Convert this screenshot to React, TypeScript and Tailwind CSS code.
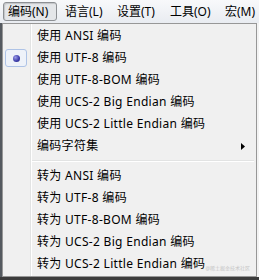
import { Fragment } from 'react'

const topMenus = [
  { label: '编码(N)', active: true, width: 'w-[54px]' },
  { label: '语言(L)', width: 'w-[52px]' },
  { label: '设置(T)', width: 'w-[53px]' },
  { label: '工具(O)', width: 'w-[55px]' },
  { label: '宏(M)', width: 'w-[40px]' },
]

const useItems = [
  { label: '使用 ANSI 编码' },
  { label: '使用 UTF-8 编码', checked: true },
  { label: '使用 UTF-8-BOM 编码' },
  { label: '使用 UCS-2 Big Endian 编码' },
  { label: '使用 UCS-2 Little Endian 编码' },
  { label: '编码字符集', submenu: true },
]

const convertItems = [
  '转为 ANSI 编码',
  '转为 UTF-8 编码',
  '转为 UTF-8-BOM 编码',
  '转为 UCS-2 Big Endian 编码',
  '转为 UCS-2 Little Endian 编码',
]

function MenuRow({ label, checked, submenu }: { label: string; checked?: boolean; submenu?: boolean }) {
  return (
    <div className="flex h-[22px] items-center">
      <div className="flex w-[28px] items-center pl-[2px]">
        {checked && (
          <div className="flex h-[18px] w-[22px] items-center justify-center rounded-[3px] border border-[#aec3e6] bg-[#eef2f9]">
            <div className="h-[7px] w-[7px] rounded-full bg-[radial-gradient(circle_at_35%_35%,#9a9ae8,#3a3aa8_60%,#26267a)]" />
          </div>
        )}
      </div>
      <span className="whitespace-nowrap pl-[6px] text-[12px] leading-none tracking-[0.3px] text-black">{label}</span>
      {submenu && (
        <svg className="ml-auto mr-[11px]" width="4" height="7" viewBox="0 0 4 7">
          <path d="M0 0 L4 3.5 L0 7 Z" fill="#000" />
        </svg>
      )}
    </div>
  )
}

export default function App() {
  return (
    <div
      className="flex h-[280px] w-[259px] flex-col overflow-hidden bg-[#3b3b3b]"
      style={{ fontFamily: '"Noto Sans", "Noto Sans CJK SC", sans-serif' }}
    >
      <div className="flex h-[23px] items-center bg-gradient-to-b from-[#f8f9fb] to-[#e9ecf1] pl-[3px]">
        {topMenus.map((menu) => (
          <div
            key={menu.label}
            className={
              menu.active
                ? `mr-[2px] flex h-[19px] shrink-0 items-center whitespace-nowrap rounded-[3px] border border-[#8d9094] bg-[#e4e6e9] pl-[4px] text-[12px] leading-none text-black shadow-[inset_1px_1px_1px_rgba(0,0,0,0.15)] ${menu.width}`
                : `flex h-[19px] shrink-0 items-center whitespace-nowrap pl-[6px] text-[12px] leading-none text-black ${menu.width}`
            }
          >
            {menu.label}
          </div>
        ))}
      </div>

      <div className="flex">
        <div className="w-[2px] bg-[#555a60]" />
        <div className="relative h-[254px] w-[255px] border border-[#979797] bg-[#f0f0f0] bg-[linear-gradient(to_right,transparent_27px,#e2e3e3_27px,#e2e3e3_28px,#ffffff_28px,#ffffff_29px,transparent_29px)] py-[1px]">
          {useItems.map((item) => (
            <MenuRow key={item.label} {...item} />
          ))}
          <div className="flex h-[8px] items-center pl-[29px] pr-[2px]">
            <div className="w-full border-t border-b border-t-[#e2e3e3] border-b-white" />
          </div>
          {convertItems.map((label) => (
            <Fragment key={label}>
              <MenuRow label={label} />
            </Fragment>
          ))}
          <span className="absolute bottom-[5px] right-[6px] whitespace-nowrap text-[5px] leading-none text-[#c6c6c6]">@稀土掘金技术社区</span>
        </div>
        <div className="w-[2px] bg-[#f3f3f3]" />
      </div>
    </div>
  )
}
